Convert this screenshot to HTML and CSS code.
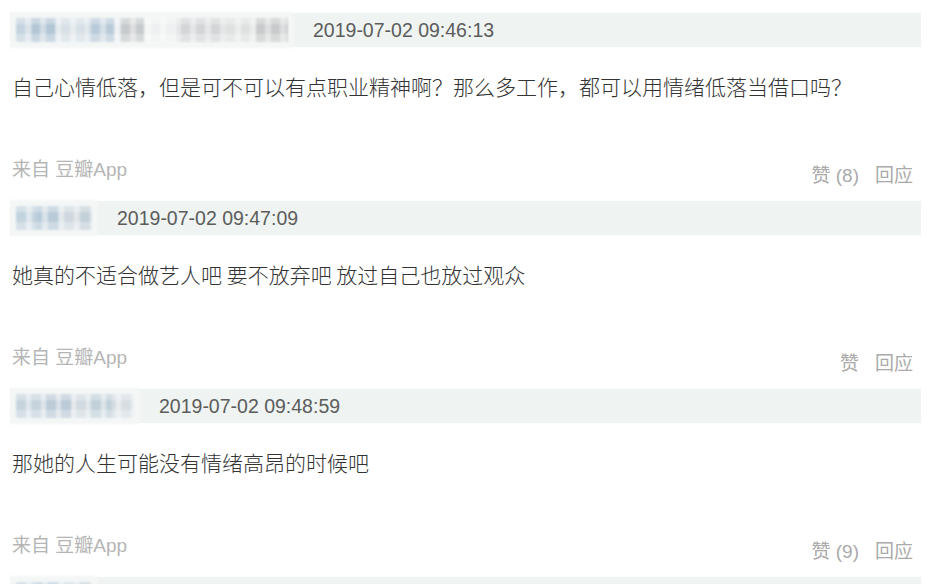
FILE: index.html
```html
<!DOCTYPE html>
<html lang="zh-CN">
<head>
  <meta charset="UTF-8">
  <meta name="viewport" content="width=device-width, initial-scale=1.0">
  <title>回应</title>
  <link rel="stylesheet" href="styles.css">
</head>
<body>
  <main class="comments">
    <div class="comment">
      <div class="comment-head">
        <span class="user user-a"></span>
        <span class="time">2019-07-02 09:46:13</span>
      </div>
      <p class="content">自己心情低落，但是可不可以有点职业精神啊？那么多工作，都可以用情绪低落当借口吗？</p>
      <div class="meta">
        <span class="from">来自 豆瓣App</span>
        <span class="actions"><a>赞 (8)</a><a>回应</a></span>
      </div>
    </div>

    <div class="comment">
      <div class="comment-head">
        <span class="user user-b"></span>
        <span class="time">2019-07-02 09:47:09</span>
      </div>
      <p class="content">她真的不适合做艺人吧 要不放弃吧 放过自己也放过观众</p>
      <div class="meta">
        <span class="from">来自 豆瓣App</span>
        <span class="actions"><a>赞</a><a>回应</a></span>
      </div>
    </div>

    <div class="comment">
      <div class="comment-head">
        <span class="user user-c"></span>
        <span class="time">2019-07-02 09:48:59</span>
      </div>
      <p class="content">那她的人生可能没有情绪高昂的时候吧</p>
      <div class="meta">
        <span class="from">来自 豆瓣App</span>
        <span class="actions"><a>赞 (9)</a><a>回应</a></span>
      </div>
    </div>

    <div class="comment">
      <div class="comment-head">
        <span class="user user-b"></span>
      </div>
    </div>
  </main>
</body>
</html>
```

FILE: styles.css
```css
body {
  margin: 0;
  padding: 0;
  background: #fff;
  font-family: "Liberation Sans", Arial, "Noto Sans CJK SC", sans-serif;
  color: #333;
}

.comments {
  padding: 0 20px 0 10px;
}

.comment {
  padding-top: 13px;
}

.comment-head {
  display: flex;
  align-items: center;
  height: 34px;
  background: #eff4f2;
}

/* blurred user name */
.user {
  display: block;
  height: 24px;
  margin-left: 6px;
  background-color: #f3f6f6;
  box-shadow: 0 0 0 6px #f4f7f6;
  filter: blur(1.2px);
}

.user-a {
  width: 272px;
  background-image:
    repeating-linear-gradient(90deg, transparent 0 9px, rgba(255, 255, 255, 0.4) 9px 15px),
    linear-gradient(180deg, rgba(255, 255, 255, 0.3) 0 6px, transparent 6px 16px, rgba(255, 255, 255, 0.3) 16px),
    linear-gradient(90deg, #c4d3de 0 16px, #b3c6d5 16px 40px, #d6e0e6 40px 72px, #b9cbd8 72px 98px, #e4eaee 98px 104px,
      #c6cacc 104px 128px, #eef1f1 128px 160px, #d3d6d7 160px 210px, #dfe1e1 210px 240px, #c8cacb 240px 272px);
}

.user-b {
  width: 76px;
  background-image:
    repeating-linear-gradient(90deg, transparent 0 10px, rgba(255, 255, 255, 0.45) 10px 16px),
    linear-gradient(180deg, rgba(255, 255, 255, 0.3) 0 6px, transparent 6px 16px, rgba(255, 255, 255, 0.3) 16px),
    linear-gradient(90deg, #c3d3de 0 20px, #b8cad8 20px 44px, #cfd8de 44px 60px, #c4d0d8 60px 76px);
}

.user-c {
  width: 118px;
  background-image:
    repeating-linear-gradient(90deg, transparent 0 10px, rgba(255, 255, 255, 0.45) 10px 15px),
    linear-gradient(180deg, rgba(255, 255, 255, 0.3) 0 6px, transparent 6px 16px, rgba(255, 255, 255, 0.3) 16px),
    linear-gradient(90deg, #c6d3dc 0 30px, #bccbd7 30px 56px, #d2dbe1 56px 72px, #c2d0da 72px 96px, #d6dee3 96px 118px);
}

.time {
  margin-left: 25px;
  font-size: 19.5px;
  color: #5c5c5c;
}

.content {
  margin: 24px 0 0 2px;
  font-family: "Noto Sans CJK SC", sans-serif;
  font-weight: 300;
  font-size: 21px;
  line-height: 30px;
  color: #333;
}

.meta {
  display: flex;
  justify-content: space-between;
  align-items: flex-start;
  height: 30px;
  margin-top: 57px;
  padding: 0 8px 0 2px;
  font-size: 19px;
  line-height: 24px;
  color: #b5b5b5;
}

.from {
  font-family: "Liberation Sans", "Noto Sans CJK SC", sans-serif;
}

.actions {
  align-self: flex-end;
  display: flex;
  gap: 16px;
}

.actions a {
  color: #aaa;
  cursor: pointer;
}
```
